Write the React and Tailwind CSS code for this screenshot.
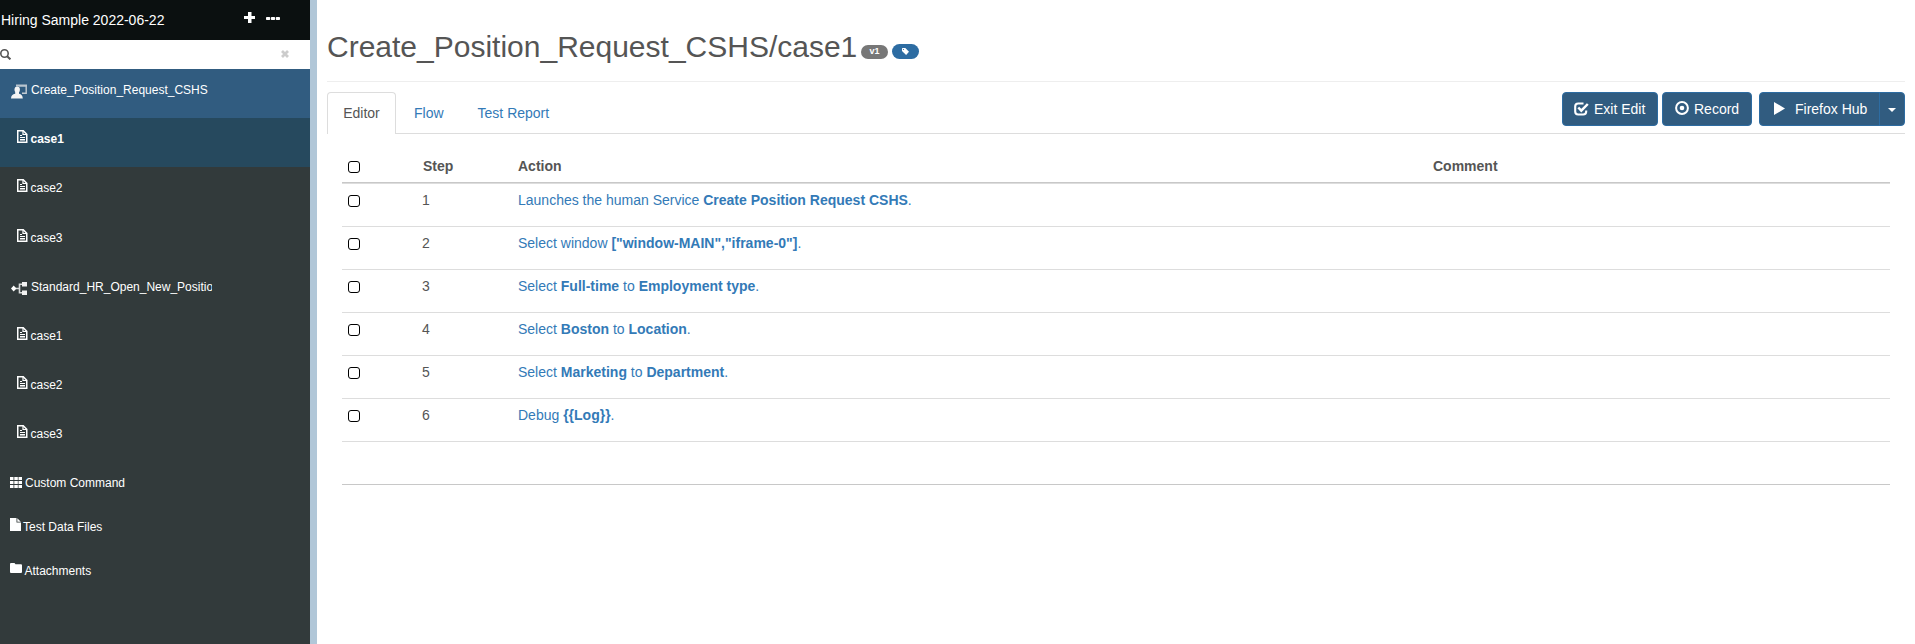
const CaseIcon = () => (
  <svg className="h-[13px] w-[12px] shrink-0" viewBox="0 0 12 13">
    <path d="M1.750.75h5.500l3.500 3.500v8H1.750z" fill="none" stroke="#fff" strokeWidth="1.500" />
    <path d="M7 .500v4h4" fill="none" stroke="#fff" strokeWidth="1.200" />
    <path d="M4 5h2v1H4zM4 7h5v1H4zM4 9h5v1.500H4z" fill="#fff" />
  </svg>
);

const ServiceIcon = () => (
  <svg className="h-[15px] w-4 shrink-0" viewBox="0 0 16 15">
    <path d="M8 1.700h7.200v7.600H11" fill="none" stroke="#c3cbd3" strokeWidth="1.400" />
    <path d="M5 .500h11v2H5z" fill="#b9c4ce" />
    <ellipse cx="6.200" cy="5.600" rx="2.700" ry="3.200" fill="#f4f4f4" />
    <path d="M0 14.500c.2-3 1.500-4 4.200-4.700V8h3.800v1.800c2.400.7 3.600 1.700 3.800 4.700z" fill="#f4f4f4" />
  </svg>
);

const ProcessIcon = () => (
  <svg className="h-[13px] w-4 shrink-0" viewBox="0 0 16 13">
    <path d="M3 6.500h5.500M12 2.200H8.500v8.600H12" fill="none" stroke="#d8dada" strokeWidth="1.600" />
    <path d="M0 6.500 2.700 3.600 5.400 6.500 2.700 9.400z" fill="#fff" />
    <path d="M11 0h5v4.400h-5zM11 8.600h5V13h-5z" fill="#f2f2f2" />
  </svg>
);

const GridIcon = () => (
  <svg className="h-[11px] w-3 shrink-0" viewBox="0 0 12 11" fill="#fff">
    <path d="M0 0h3.500v3H0zM4.300 0h3.500v3H4.300zM8.500 0H12v3H8.500zM0 4h3.500v3H0zM4.300 4h3.500v3H4.300zM8.500 4H12v3H8.500zM0 8h3.500v3H0zM4.300 8h3.500v3H4.300zM8.500 8H12v3H8.500z" />
  </svg>
);

const FileIcon = () => (
  <svg className="h-[13px] w-[11px] shrink-0" viewBox="0 0 11 13" fill="#fff">
    <path d="M0 0h6.500v4.500H11V13H0z" />
    <path d="M7.300.200 10.800 3.700H7.300z" />
  </svg>
);

const FolderIcon = () => (
  <svg className="h-[10px] w-3 shrink-0" viewBox="0 0 12 10" fill="#fff">
    <path d="M0 1Q0 0 1 0h3.500l1 1.200H11q1 0 1 1V9q0 1-1 1H1Q0 10 0 9z" />
  </svg>
);

const TREE = [
  { label: "Create_Position_Request_CSHS", kind: "service", row: "h-[49px] bg-[#315c80]" },
  { label: "case1", kind: "case", row: "h-[49px] bg-[#26495e] font-bold" },
  { label: "case2", kind: "case", row: "h-[50px]" },
  { label: "case3", kind: "case", row: "h-[49px]" },
  { label: "Standard_HR_Open_New_Position", kind: "process", row: "h-[49px]" },
  { label: "case1", kind: "case", row: "h-[49px]" },
  { label: "case2", kind: "case", row: "h-[49px]" },
  { label: "case3", kind: "case", row: "h-[49px]" },
];

function TreeRow({ item }) {
  if (item.kind === "case") {
    return (
      <div className={`flex items-start pl-4 ${item.row}`}>
        <div className="pt-[12px]"><CaseIcon /></div>
        <span className="pl-[2.5px] pt-[13px] leading-4">{item.label}</span>
      </div>
    );
  }
  return (
    <div className={`flex items-start pl-[11px] ${item.row}`}>
      <div className={item.kind === "service" ? "pt-[15px]" : "pt-[16px]"}>
        {item.kind === "service" ? <ServiceIcon /> : <ProcessIcon />}
      </div>
      <span className="ml-1 w-[181px] overflow-hidden whitespace-nowrap pt-[13px] leading-4">{item.label}</span>
    </div>
  );
}

function Sidebar() {
  return (
    <aside className="flex w-[310px] shrink-0 flex-col bg-[#323a3b] text-[12px] text-white">
      <div className="flex h-10 items-start bg-[#0b1010] pl-px text-[14px]">
        <span className="w-[243px] pt-[10px] leading-5">Hiring Sample 2022-06-22</span>
        <svg className="mt-3 h-[11px] w-[11px]" viewBox="0 0 11 11" fill="#fff">
          <path d="M4 0h3.500v4H11v3H7.500v4H4V7H0V4h4z" />
        </svg>
        <svg className="ml-[11px] mt-[17px] h-[3px] w-[14px]" viewBox="0 0 14 3" fill="#fff">
          <rect x="0" y="0" width="4.200" height="3" rx=".800" />
          <rect x="4.900" y="0" width="4.200" height="3" rx=".800" />
          <rect x="9.800" y="0" width="4.200" height="3" rx=".800" />
        </svg>
      </div>
      <div className="flex h-[29px] items-start bg-white">
        <svg className="mt-[9px] h-[11px] w-[11px]" viewBox="0 0 11 11" fill="none" stroke="#555">
          <circle cx="4.500" cy="4.500" r="3.700" strokeWidth="1.600" />
          <path d="m7.200 7.200 3.200 3.200" strokeWidth="2" />
        </svg>
        <svg className="ml-[270px] mt-[10px] h-2 w-2" viewBox="0 0 8 8">
          <path d="m1 1 6 6M7 1 1 7" stroke="#ccc" strokeWidth="2.800" />
        </svg>
      </div>
      {TREE.map((item, i) => <TreeRow key={i} item={item} />)}
      <div className="flex h-11 items-start pl-[10px]">
        <div className="pt-[15px]"><GridIcon /></div>
        <span className="pl-[3px] pt-[13px] leading-4">Custom Command</span>
      </div>
      <div className="flex h-11 items-start pl-[10px]">
        <div className="pt-[12px]"><FileIcon /></div>
        <span className="pl-[2px] pt-[13px] leading-4">Test Data Files</span>
      </div>
      <div className="flex h-11 items-start pl-[10px]">
        <div className="pt-[13px]"><FolderIcon /></div>
        <span className="pl-[2.5px] pt-[13px] leading-4">Attachments</span>
      </div>
    </aside>
  );
}

const STEPS = [
  ["Launches the human Service ", <b>Create Position Request CSHS</b>, "."],
  ["Select window ", <b>{'["window-MAIN","iframe-0"]'}</b>, "."],
  ["Select ", <b>Full-time</b>, " to ", <b>Employment type</b>, "."],
  ["Select ", <b>Boston</b>, " to ", <b>Location</b>, "."],
  ["Select ", <b>Marketing</b>, " to ", <b>Department</b>, "."],
  ["Debug ", <b>{"{{Log}}"}</b>, "."],
];

const Check = ({ className }) => (
  <div className={`ml-[6px] h-[12px] w-[12px] rounded-[3px] border border-black bg-white ${className}`} />
);

const COLS = "grid grid-cols-[81px_95px_915px_1fr]";
const BTN = "flex h-[34px] items-start border border-[#2d6ca2] bg-[#315c80] text-white leading-5";

function StepTable() {
  return (
    <div className="ml-[15px] mr-[15px] flex flex-col">
      <div className={`${COLS} h-[50px] border-b border-[#ddd] font-bold shadow-[inset_0_-1px_0_#c8c8c8]`}>
        <Check className="mt-[27px]" />
        <span className="pt-[22px] leading-5">Step</span>
        <span className="pt-[22px] leading-5">Action</span>
        <span className="pt-[22px] leading-5">Comment</span>
      </div>
      {STEPS.map((parts, i) => (
        <div key={i} className={`${COLS} h-[43px] border-b border-[#ddd]`}>
          <Check className="mt-[11px]" />
          <span className="-ml-px pt-[6px] leading-5">{i + 1}</span>
          <span className="pt-[6px] leading-5 text-[#337ab7]">
            {parts.map((part, j) => <span key={j}>{part}</span>)}
          </span>
        </div>
      ))}
      <div className="h-[43px] border-b border-[#c8c8c8]" />
    </div>
  );
}

export default function App() {
  return (
    <div className="flex h-[644px] w-[1915px] overflow-hidden bg-white font-['Liberation_Sans',Arial,sans-serif] text-[14px] text-[#555]">
      <Sidebar />
      <div className="w-[7px] shrink-0 bg-[#b1c7d8]" />
      <main className="flex min-w-0 grow flex-col pl-[10px] pr-[10px]">
        <div className="flex h-[82px] items-start border-b border-[#eee]">
          <h1 className="w-[534px] whitespace-nowrap pt-[30px] text-[30px] leading-[34px]">Create_Position_Request_CSHS/case1</h1>
          <span className="mt-[45px] h-[14px] w-[27px] rounded-full bg-[#777] text-center text-[9px] font-bold leading-[13px] text-white">v1</span>
          <span className="ml-1 mt-[44px] flex h-[15px] w-[27px] items-center justify-center rounded-full bg-[#2d6ca2]">
            <svg className="h-[7px] w-[7px]" viewBox="0 0 7 7">
              <path d="M0 .500Q0 0 .500 0H3.300L7 3.800 4.100 7 0 3z" fill="#fff" />
              <circle cx="1.500" cy="1.500" r=".600" fill="#2d6ca2" />
            </svg>
          </span>
        </div>
        <div className="flex h-[52px] items-start border-b border-[#ddd] pt-[10px]">
          <div className="h-[42px] w-[69px] shrink-0 rounded-t-[4px] border border-b-0 border-[#ddd] bg-white pt-[10px] text-center leading-5">Editor</div>
          <div className="pl-[18px] pt-[11px] leading-5 text-[#337ab7]">Flow</div>
          <div className="pl-[34px] pt-[11px] leading-5 text-[#337ab7]">Test Report</div>
          <div className="ml-auto flex">
            <div className={`${BTN} w-24 rounded-[4px] pl-[11px] pt-[6px]`}>
              <svg className="mt-[3px] h-[14px] w-[15px]" viewBox="0 0 15 14" fill="none" stroke="#fff">
                <path d="M9.500 1.500H4.200Q1.200 1.500 1.200 4.500v5q0 3 3 3h5q3 0 3-3V8.500" strokeWidth="2.100" />
                <path d="m4.300 5.500 3 3.200L13.800 2" strokeWidth="2.500" />
              </svg>
              <span className="pl-[5px]">Exit Edit</span>
            </div>
            <div className={`${BTN} ml-1 w-[90px] rounded-[4px] pl-3 pt-[6px]`}>
              <svg className="mt-[2px] h-[14px] w-[14px]" viewBox="0 0 14 14">
                <circle cx="7" cy="7" r="5.900" fill="none" stroke="#fff" strokeWidth="2" />
                <circle cx="7" cy="7" r="2.300" fill="#fff" />
              </svg>
              <span className="pl-[5px]">Record</span>
            </div>
            <div className={`${BTN} ml-[7px] w-[121px] rounded-l-[4px] pl-[14px] pt-[6px]`}>
              <svg className="mt-[3px] h-[13px] w-[11px]" viewBox="0 0 11 13" fill="#fff">
                <path d="M0 0 11 6.500 0 13z" />
              </svg>
              <span className="pl-[10px]">Firefox Hub</span>
            </div>
            <div className={`${BTN} -ml-px w-[26px] justify-center rounded-r-[4px] pt-[15px]`}>
              <svg className="h-1 w-2" viewBox="0 0 8 4" fill="#fff"><path d="M0 0h8L4 4z" /></svg>
            </div>
          </div>
        </div>
        <StepTable />
      </main>
    </div>
  );
}
